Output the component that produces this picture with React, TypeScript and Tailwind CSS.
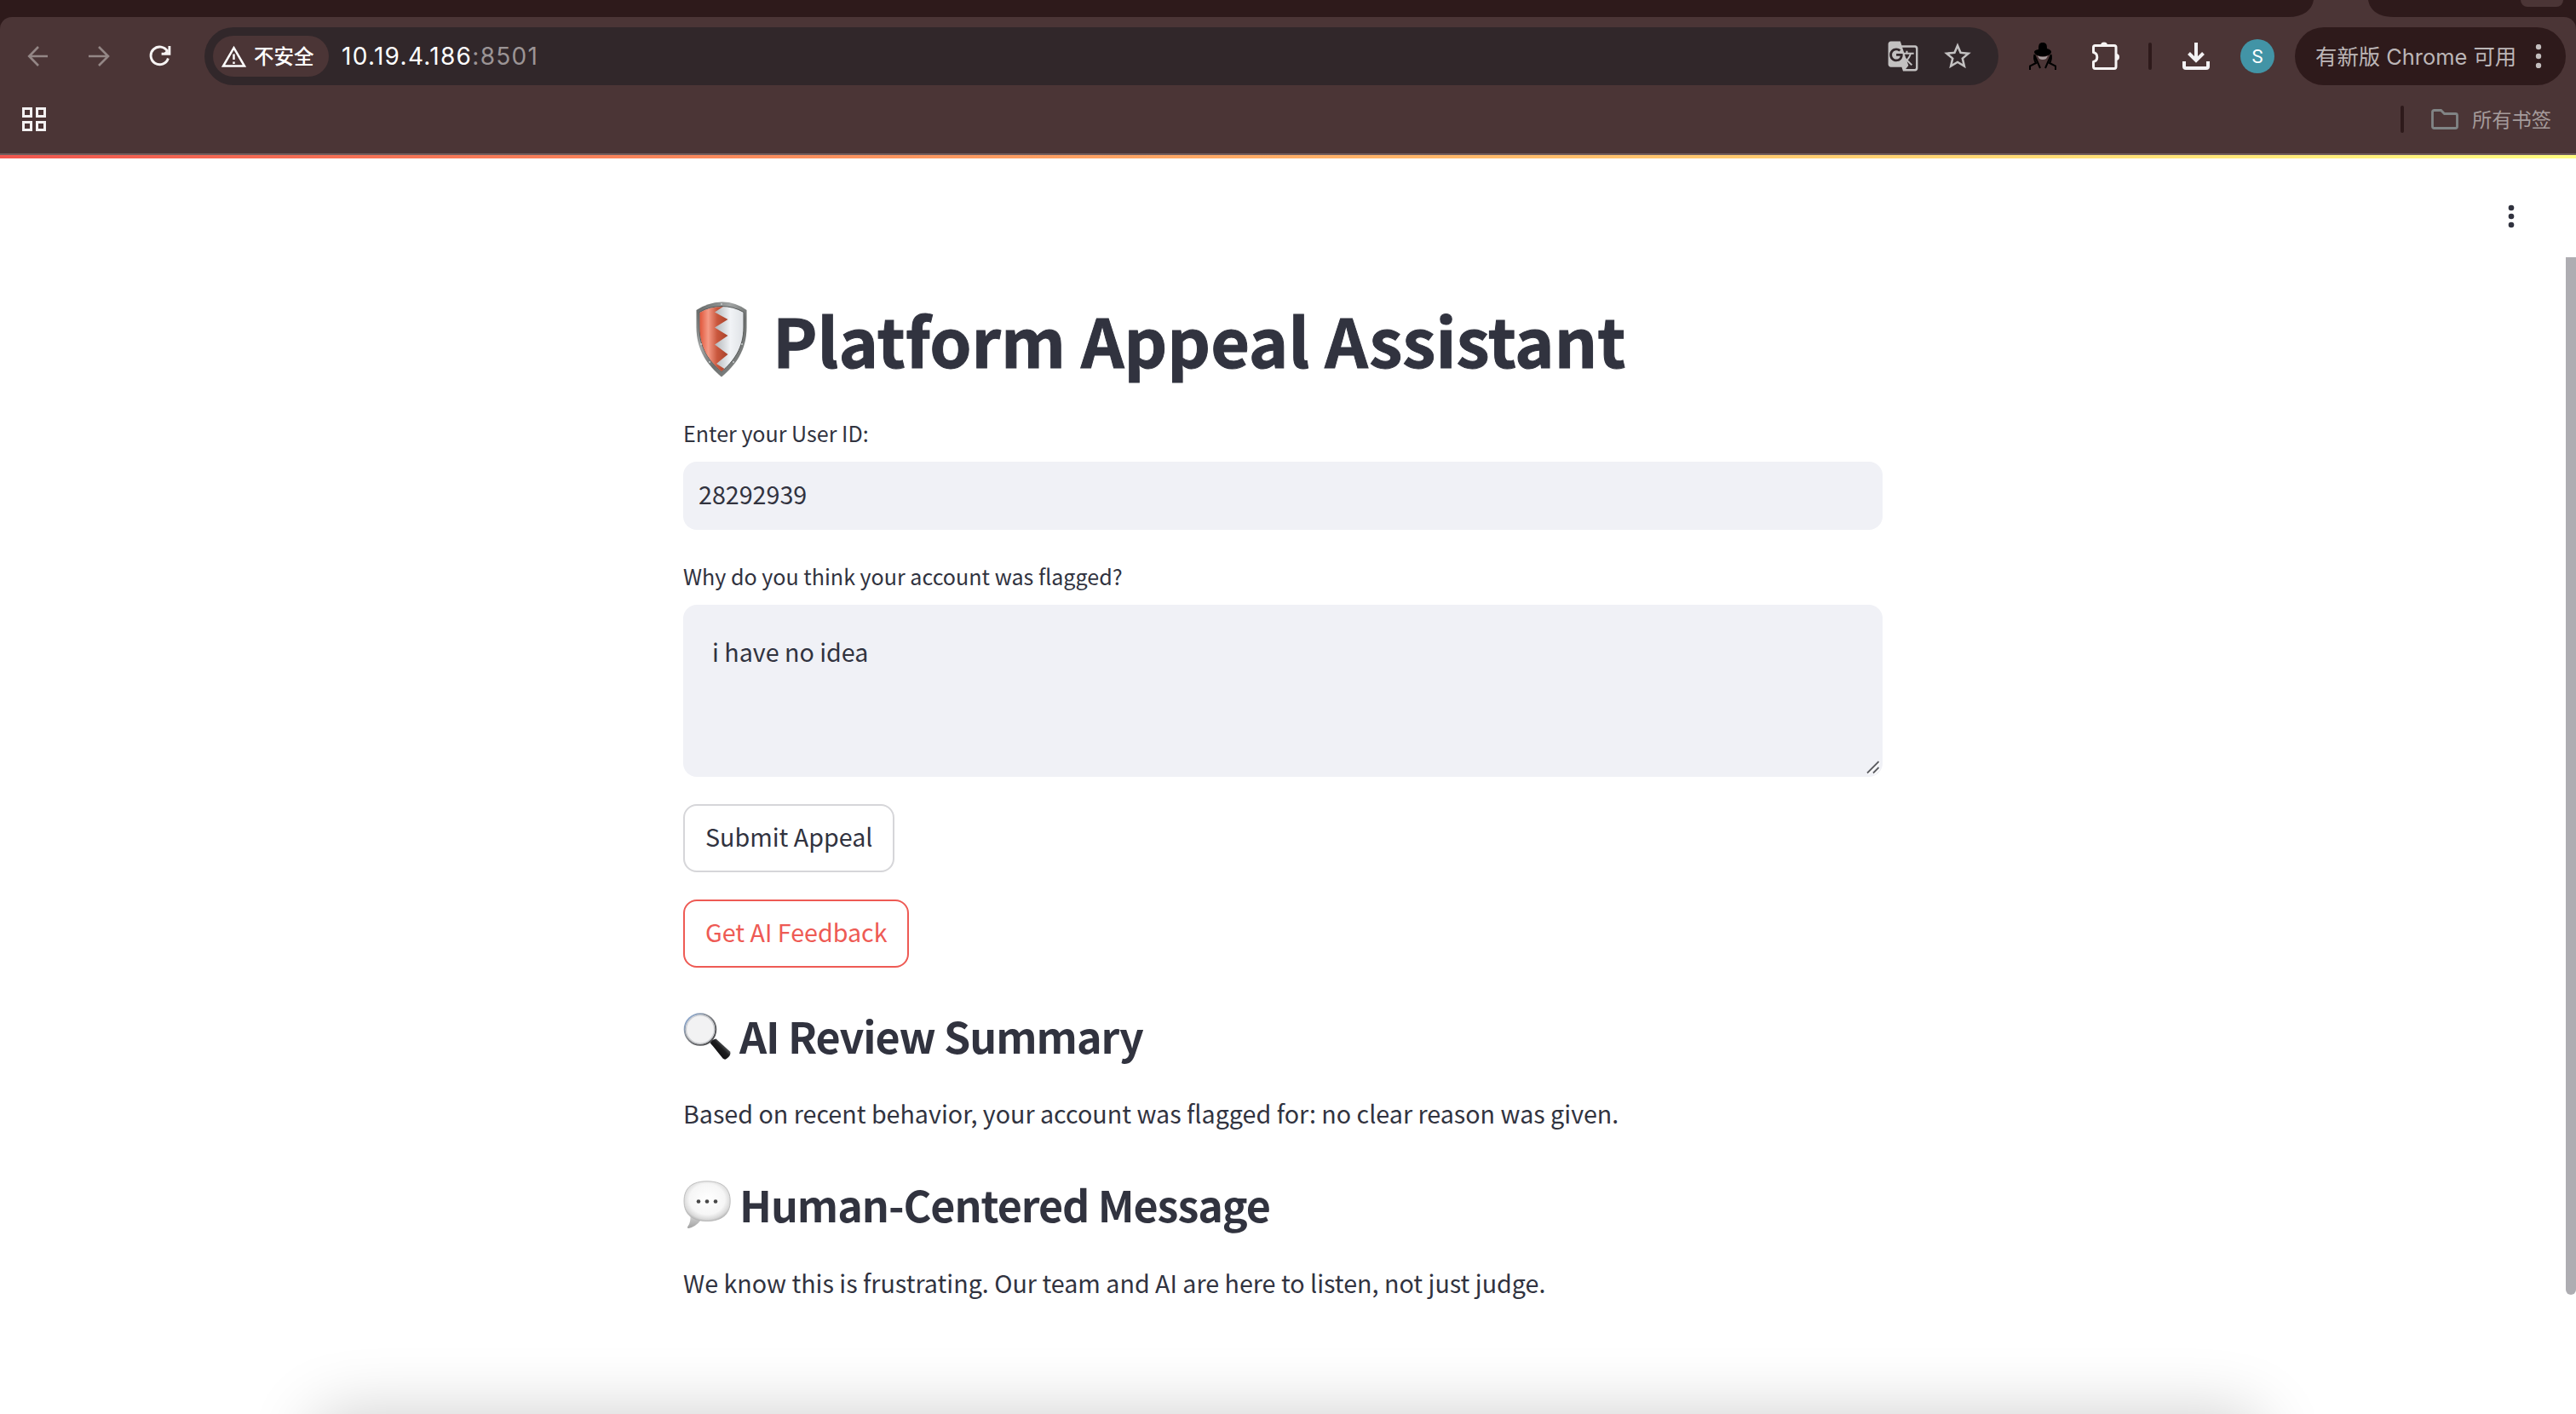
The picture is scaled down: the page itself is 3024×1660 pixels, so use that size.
import React from "react";
import { MdGTranslate, MdStarBorder } from "react-icons/md";

function TabStrip() {
  return (
    <div className="relative flex h-5 bg-[#2e1a1b]">
      <svg className="ml-[2686px] h-5 w-[128px] shrink-0" viewBox="0 0 128 20" fill="#4b3536">
        <path d="M0 20C18 20 28 12 30 0H94C96 12 106 20 124 20Z" />
      </svg>
      <div className="ml-[145px] h-2 w-[50px] rounded-b-[22px] bg-[#4b3536]" />
    </div>
  );
}

function Toolbar() {
  return (
    <div className="flex h-[92px] items-center">
      <svg className="ml-8 size-[26px] shrink-0" viewBox="0 0 26 26" fill="none" stroke="#948786" strokeWidth="2.6">
        <path d="M24 13H3M13 2 2.2 13 13 24" />
      </svg>
      <svg className="ml-[46px] size-[26px] shrink-0" viewBox="0 0 26 26" fill="none" stroke="#948786" strokeWidth="2.6">
        <path d="M0 13H23M12 2 23 13 12 24" />
      </svg>
      <svg className="ml-[45px] size-[26px] shrink-0" viewBox="0 0 26 26" fill="none" stroke="#f6f3f3" strokeWidth="2.9">
        <path d="M22.4 15.5A10.4 10.4 0 1 1 21.5 7.2" />
        <path d="M23.9 1V10.2H14.6" />
        <path d="M17 9.6 22.5 4.5 23 9.6Z" fill="#f6f3f3" stroke="none" />
      </svg>

      <div className="ml-[39px] flex h-[68px] w-[2106px] shrink-0 items-center rounded-full bg-[#31272a] pl-[10px]">
        <div className="flex h-12 w-[136px] items-center rounded-full bg-[#4b3536] pl-[10px] text-white">
          <svg className="size-[29px]" viewBox="0 0 29 29" fill="none" stroke="#fff" strokeWidth="2.5">
            <path d="M14.5 4.2 27 25.6H2Z" />
            <path d="M14.5 11.5V18M14.5 20.4V23" strokeWidth="2.4" />
          </svg>
          <span className="ml-[9px] pb-[2px] font-['Noto_Sans_CJK_SC',sans-serif] text-[23.5px] leading-8 font-medium">不安全</span>
        </div>
        <div className="ml-[15px] flex font-[Inter,sans-serif] text-[28px] leading-9 tracking-[1.3px] text-white">
          <span>10.19.4.186</span>
          <span className="text-[#9b9495]">:8501</span>
        </div>
        <MdGTranslate className="mr-[26px] ml-auto size-[38px] text-[#c3c1c1]" />
        <MdStarBorder className="mr-[29px] size-[38px] text-[#c3c1c1]" />
      </div>

      <svg className="ml-9 size-8 shrink-0" viewBox="0 0 32 32">
        <path d="M11 8C11 2 12 0 16 0S21 2 21 7Q26 8.500 26 11C26 14 21 16 16 16S6 14 6 11Q6 9 11 8Z" fill="#000" />
        <path d="M10 15.500Q16 18 22 15.500L20 19Q16 21 12 19Z" fill="#a79b9c" />
        <path d="M6.500 14Q5 19 8 24L1 27.500V32M6.500 15 13 30M25.500 14Q27 19 24 24L31 27.500V32M25.500 15 19 30" fill="none" stroke="#000" strokeWidth="2" />
      </svg>
      <svg className="ml-[42px] h-[34px] w-[33px] shrink-0" viewBox="0 0 33 34" fill="none" stroke="#f6f3f3" strokeWidth="3" strokeLinejoin="round">
        <path d="M1.500 6.500Q1.500 4.500 3.500 4.500H26Q28 4.500 28 6.500V29Q28 31.500 26 31.500H3.500Q1.500 31.500 1.500 29V23.500Q5.800 22.500 5.800 18T1.500 12.500Z" />
        <path d="M10 4.500A4 4 0 0 1 18 4.500ZM28 14A4 4 0 0 1 28 22Z" fill="#f6f3f3" stroke="none" />
      </svg>
      <div className="ml-[33px] h-8 w-1 shrink-0 rounded-full bg-[#2e1a1b]" />
      <svg className="ml-9 size-8 shrink-0" viewBox="0 0 32 32" fill="none" stroke="#f3f2f4" strokeWidth="4">
        <path d="M16 0V20M7.500 12.500 16 21 24.500 12.500" />
        <path d="M2 22V28Q2 30 4 30H28Q30 30 30 28V22" />
      </svg>
      <div className="ml-9 flex size-10 shrink-0 items-center justify-center rounded-full bg-[#4294a6] font-[Roboto,sans-serif] text-[22px] text-white">S</div>

      <div className="ml-6 flex h-[68px] w-[318px] shrink-0 items-center rounded-full bg-[#2e1a1b] pl-6 text-[#bcb6b7]">
        <span className="pt-px font-[Inter,'Noto_Sans_CJK_SC',sans-serif] text-[25.400px] leading-9 whitespace-nowrap">有新版 Chrome 可用</span>
        <svg className="mr-[28px] ml-auto h-7 w-2" viewBox="0 0 8 28" fill="#c3bebe">
          <circle cx="4" cy="3" r="3.200" />
          <circle cx="4" cy="14" r="3.200" />
          <circle cx="4" cy="25" r="3.200" />
        </svg>
      </div>
    </div>
  );
}

function BookmarksBar() {
  return (
    <div className="flex h-[68px] items-center pr-[29px] pb-[12px] pl-[26px]">
      <svg className="size-7" viewBox="0 0 28 28" fill="none" stroke="#f3f1f2" strokeWidth="3">
        <path d="M1.500 1.500H10.500V10.500H1.500ZM17.500 1.500H26.500V10.500H17.500ZM1.500 17.500H10.500V26.500H1.500ZM17.500 17.500H26.500V26.500H17.500Z" />
      </svg>
      <div className="ml-auto h-8 w-1 rounded-full bg-[#2e1a1b]" />
      <svg className="ml-8 h-6 w-8" viewBox="0 0 32 24" fill="none" stroke="#808485" strokeWidth="2.800">
        <path d="M1.500 3.500Q1.500 1.500 3.500 1.500H11.500L15.500 5.500H28.500Q30.500 5.500 30.500 7.500V20.500Q30.500 22.500 28.500 22.500H3.500Q1.500 22.500 1.500 20.500Z" />
      </svg>
      <span className="ml-[16px] pb-[3px] font-['Noto_Sans_CJK_SC',sans-serif] text-[23.250px] leading-8 text-[#a59b9b]">所有书签</span>
    </div>
  );
}

function ShieldIcon() {
  return (
    <svg className="mt-[5px] ml-[15px] h-[89px] w-[60px] shrink-0" viewBox="0 0 60 89">
      <defs>
        <linearGradient id="shieldRim" x1="0" y1="0" x2="1" y2="1">
          <stop offset="0" stopColor="#5d605f" />
          <stop offset=".35" stopColor="#a2a5a5" />
          <stop offset=".6" stopColor="#6d706f" />
          <stop offset="1" stopColor="#8d9090" />
        </linearGradient>
        <linearGradient id="shieldRed" x1="0" y1="0" x2="1" y2="0">
          <stop offset="0" stopColor="#e0563a" />
          <stop offset=".3" stopColor="#f59a85" />
          <stop offset=".62" stopColor="#c9573d" />
          <stop offset="1" stopColor="#a8432b" />
        </linearGradient>
        <linearGradient id="shieldSilver" x1="0" y1="0" x2="1" y2="0">
          <stop offset="0.300" stopColor="#a9adb0" />
          <stop offset=".7" stopColor="#f1f3f6" />
          <stop offset="1" stopColor="#dfe2e6" />
        </linearGradient>
      </defs>
      <path d="M0.500 10Q14 1 30 .5T59.500 10V30C59.500 58 46 75 30 88.500C14 75 .5 58 .5 30Z" fill="url(#shieldRim)" />
      <path d="M4 12.500Q16 5.500 30 5.500T56 12.500V30C56 55 44 70 30 82.500C16 70 4 55 4 30Z" fill="url(#shieldSilver)" stroke="#565958" strokeWidth="1" />
      <path d="M4.500 13Q16 6 32 6L22 12.500 37.500 21 22 30.500 37.500 40 22 50.500 37.500 62 24 73 33.500 79 30 82C16 70 4.500 55 4.500 30Z" fill="url(#shieldRed)" />
      <g fill="#c9cccc">
        <circle cx="30" cy="3" r="1" />
        <circle cx="6" cy="50" r="1" />
        <circle cx="54" cy="50" r="1" />
        <circle cx="16" cy="71" r="1" />
        <circle cx="44" cy="71" r="1" />
      </g>
    </svg>
  );
}

function MagnifierIcon() {
  return (
    <svg className="mt-[3px] size-14 shrink-0" viewBox="0 0 56 56">
      <defs>
        <linearGradient id="lensRim" x1="0" y1="0" x2="1" y2="1">
          <stop offset="0" stopColor="#8fb4e6" />
          <stop offset=".4" stopColor="#8a8d92" />
          <stop offset="1" stopColor="#3b3b3d" />
        </linearGradient>
        <linearGradient id="lensGrip" x1="0" y1="1" x2="1" y2="0">
          <stop offset="0" stopColor="#000" />
          <stop offset=".55" stopColor="#1d1d1f" />
          <stop offset=".75" stopColor="#6b6e70" />
          <stop offset="1" stopColor="#1a1a1a" />
        </linearGradient>
      </defs>
      <path d="M32 34 36 38" stroke="#77797b" strokeWidth="4" />
      <path d="M32 36.500Q33 32.500 38.500 31.500L55 46.500Q57 51 50 55.500Q48 56 46.500 54.500Z" fill="url(#lensGrip)" />
      <circle cx="20" cy="20.500" r="18.300" fill="#f2f2f3" stroke="url(#lensRim)" strokeWidth="2" />
      <circle cx="20" cy="20.500" r="16.500" fill="none" stroke="#c9cbcf" strokeWidth="1.200" />
    </svg>
  );
}

function SpeechBubbleIcon() {
  return (
    <svg className="mt-[3px] size-14 shrink-0" viewBox="0 0 56 56">
      <defs>
        <radialGradient id="bubbleFill" cx=".5" cy=".45" r=".55">
          <stop offset="0" stopColor="#fff" />
          <stop offset=".7" stopColor="#f6f6f6" />
          <stop offset=".92" stopColor="#d9d9d9" />
          <stop offset="1" stopColor="#bdbdbd" />
        </radialGradient>
        <linearGradient id="bubbleTail" x1="0" y1="0" x2="0" y2="1">
          <stop offset="0" stopColor="#dcdcdc" />
          <stop offset="1" stopColor="#a3a3a3" />
        </linearGradient>
      </defs>
      <path d="M8 38Q10 48 5 54.500Q4.500 56 6.500 56Q15 54 21 46Z" fill="url(#bubbleTail)" />
      <path d="M28 .8C45 .8 55.200 8 55.200 24S45 47.500 28 47.500S1 40 1 24S11 .8 28 .8Z" fill="url(#bubbleFill)" stroke="#b4b4b4" strokeWidth=".8" />
      <g fill="#474747">
        <circle cx="18" cy="24.500" r="2.300" />
        <circle cx="28" cy="24.500" r="2.300" />
        <circle cx="38" cy="24.500" r="2.300" />
      </g>
    </svg>
  );
}

function SectionHeading({ icon, children }: { icon: React.ReactNode; children: string }) {
  return (
    <div className="flex h-[60px] items-start">
      {icon}
      <h2 className="ml-[10px] text-[50.200px] leading-[60px] font-bold tracking-[-1.050px] whitespace-nowrap">{children}</h2>
    </div>
  );
}

function AppealForm() {
  return (
    <main className="ml-[802px] w-[1408px] pt-[163px] text-[28.670px] text-[#31333f]">
      <div className="flex h-24 items-start">
        <ShieldIcon />
        <h1 className="ml-[30px] pt-px text-[78.900px] leading-24 font-bold whitespace-nowrap [-webkit-text-stroke:1px_#31333f]">Platform Appeal Assistant</h1>
      </div>

      <label className="mt-[45px] block text-[25.080px] leading-9">Enter your User ID:</label>
      <div className="mt-4 flex h-20 items-center rounded-2xl bg-[#f0f1f6] pb-[5px] pl-[18px]">28292939</div>

      <label className="mt-9 block text-[25.080px] leading-9">Why do you think your account was flagged?</label>
      <div className="relative mt-4 h-[202px] rounded-2xl bg-[#f0f1f6] pt-[31px] pl-[34px] leading-[48px]">
        i have no idea
        <svg className="absolute right-[3px] bottom-[3px] size-4" viewBox="0 0 16 16" fill="none">
          <path d="M2 15.500 15.500 2M9 15.500 15.500 9" stroke="#fff" strokeWidth="2" />
          <path d="M1 14.500 14.500 1M8 14.500 14.500 8" stroke="#5c5d62" strokeWidth="1.800" />
        </svg>
      </div>

      <div className="mt-8 flex flex-col items-start gap-8">
        <button className="flex h-20 items-center rounded-2xl border-2 border-[#d6d6d9] px-6 pb-[5px]">Submit Appeal</button>
        <button className="flex h-20 items-center rounded-2xl border-2 border-[#ee5a54] pr-[23px] pb-[5px] pl-6 text-[#ee5a54]">Get AI Feedback</button>
      </div>

      <section className="mt-[49px]">
        <SectionHeading icon={<MagnifierIcon />}>AI Review Summary</SectionHeading>
        <p className="mt-[38px] leading-[48px]">Based on recent behavior, your account was flagged for: no clear reason was given.</p>
      </section>
      <section className="mt-[52px]">
        <SectionHeading icon={<SpeechBubbleIcon />}>Human-Centered Message</SectionHeading>
        <p className="mt-[39px] leading-[48px]">We know this is frustrating. Our team and AI are here to listen, not just judge.</p>
      </section>
    </main>
  );
}

export default function App() {
  return (
    <div className="relative flex h-[1660px] w-[3024px] flex-col overflow-hidden bg-white font-['Noto_Sans_CJK_SC',sans-serif]">
      <header className="bg-[#2e1a1b]">
        <TabStrip />
        <div className="h-[162px] rounded-t-[14px] border-b-2 border-b-[#6f5c5d] bg-[#4b3536]">
          <Toolbar />
          <BookmarksBar />
        </div>
      </header>
      <div className="h-1 bg-linear-to-r from-[#f0564f] to-[#fffd80]" />
      <AppealForm />

      <svg className="absolute top-[240px] right-[72px] h-7 w-2" viewBox="0 0 8 28" fill="#31333f">
        <circle cx="4" cy="4" r="3.300" />
        <circle cx="4" cy="14" r="3.300" />
        <circle cx="4" cy="24" r="3.300" />
      </svg>
      <div className="absolute top-[302px] right-0 h-[1218px] w-3 rounded-b-full bg-[#aeadb2]" />
      <div className="absolute top-full left-[370px] h-[300px] w-[2282px] rounded-[24px] shadow-[0_0_80px_rgba(0,0,0,0.2)]" />
    </div>
  );
}
